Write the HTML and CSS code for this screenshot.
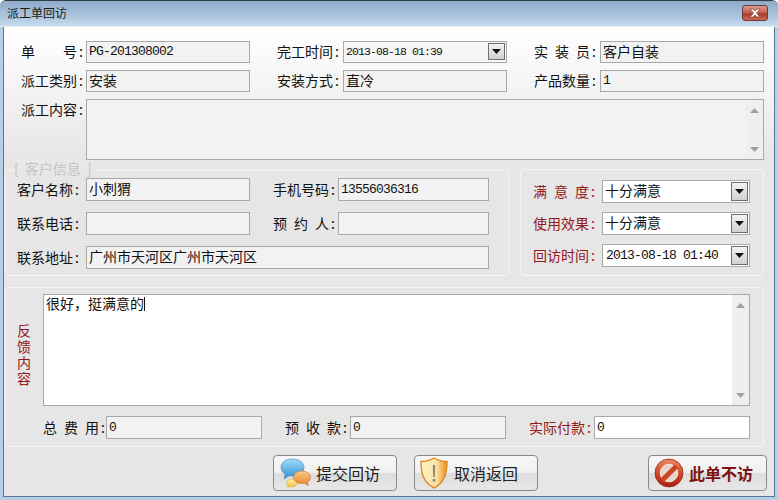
FILE: index.html
```html
<!DOCTYPE html>
<html lang="zh-CN">
<head>
  <meta charset="UTF-8" />
  <title>派工单回访</title>
  <link rel="stylesheet" href="styles.css">
</head>
<body>
<div class="window">
  <div class="titlebar">
    <span class="title">派工单回访</span>
    <div class="close">
      <svg width="14" height="10" viewBox="0 0 14 10"><path d="M2 1h3l2 2 2-2h3L8.500 5 12 9H9L7 7 5 9H2l3.500-4z" fill="#fff" stroke="#7a2a22" stroke-width=".6"/></svg>
    </div>
  </div>

  <div class="client">
    <!-- order info -->
    <div class="order">
      <div class="item"><label class="lbl"><span class="name">单号</span>:</label><div class="field mono">PG-201308002</div></div>
      <div class="item"><label class="lbl"><span class="name">完工时间</span>:</label>
        <div class="field combo small">2013-08-18 01:39
          <span class="drop"><svg width="9" height="5" viewBox="0 0 9 5"><path d="M0 0h9L4.500 5z" fill="#111"/></svg></span>
        </div>
      </div>
      <div class="item"><label class="lbl"><span class="name">实装员</span>:</label><div class="field">客户自装</div></div>
      <div class="item"><label class="lbl"><span class="name">派工类别</span>:</label><div class="field">安装</div></div>
      <div class="item"><label class="lbl"><span class="name">安装方式</span>:</label><div class="field">直冷</div></div>
      <div class="item"><label class="lbl"><span class="name">产品数量</span>:</label><div class="field mono">1</div></div>
    </div>
    <div class="content-row">
      <label class="lbl"><span class="name">派工内容</span>:</label>
      <div class="field memo">
        <div class="scroll">
          <svg width="9" height="5" viewBox="0 0 9 5"><path d="M0 5h9L4.500 0z" fill="#a0a0a0"/></svg>
          <svg width="9" height="5" viewBox="0 0 9 5"><path d="M0 0h9L4.500 5z" fill="#a0a0a0"/></svg>
        </div>
      </div>
    </div>

    <div class="panels">
      <!-- customer info -->
      <div class="panel customer">
        <span class="legend">[ 客户信息 ]</span>
        <label class="lbl"><span class="name">客户名称</span>:</label><div class="field">小刺猬</div>
        <label class="lbl lbl-mid"><span class="name">手机号码</span>:</label><div class="field mono">13556036316</div>
        <label class="lbl"><span class="name">联系电话</span>:</label><div class="field"></div>
        <label class="lbl lbl-mid"><span class="name">预约人</span>:</label><div class="field"></div>
        <label class="lbl"><span class="name">联系地址</span>:</label><div class="field wide">广州市天河区广州市天河区</div>
      </div>
      <!-- visit result -->
      <div class="panel result">
        <label class="lbl red"><span class="name">满意度</span>:</label>
        <div class="field combo white">十分满意
          <span class="drop"><svg width="9" height="5" viewBox="0 0 9 5"><path d="M0 0h9L4.500 5z" fill="#111"/></svg></span>
        </div>
        <label class="lbl red"><span class="name">使用效果</span>:</label>
        <div class="field combo white">十分满意
          <span class="drop"><svg width="9" height="5" viewBox="0 0 9 5"><path d="M0 0h9L4.500 5z" fill="#111"/></svg></span>
        </div>
        <label class="lbl red"><span class="name">回访时间</span>:</label>
        <div class="field combo white mono">2013-08-18 01:40
          <span class="drop"><svg width="9" height="5" viewBox="0 0 9 5"><path d="M0 0h9L4.500 5z" fill="#111"/></svg></span>
        </div>
      </div>
    </div>

    <!-- feedback -->
    <div class="panel feedback">
      <div class="fb-top">
        <div class="fb-side">反馈内容</div>
        <div class="field fb-text white">
          <span class="fb-value">很好，挺满意的<i class="caret"></i></span>
          <div class="scroll">
            <svg width="9" height="5" viewBox="0 0 9 5"><path d="M0 5h9L4.500 0z" fill="#a0a0a0"/></svg>
            <svg width="9" height="5" viewBox="0 0 9 5"><path d="M0 0h9L4.500 5z" fill="#a0a0a0"/></svg>
          </div>
        </div>
      </div>
      <div class="fb-bottom">
        <div class="item2 first"><label class="lbl"><span class="name">总费用</span>:</label><div class="field mono">0</div></div>
        <div class="item2"><label class="lbl"><span class="name">预收款</span>:</label><div class="field mono">0</div></div>
        <div class="item2"><label class="lbl red"><span class="name">实际付款</span>:</label><div class="field mono white">0</div></div>
      </div>
    </div>

    <div class="buttons">
      <div class="btn btn-submit">
        <svg width="32" height="30" viewBox="0 0 32 30">
          <defs>
            <linearGradient id="gb" x1="0" y1="0" x2="0" y2="1"><stop offset="0" stop-color="#9fdcf7"/><stop offset="1" stop-color="#2f8fd8"/></linearGradient>
            <linearGradient id="go" x1="0" y1="0" x2="0" y2="1"><stop offset="0" stop-color="#f9c98a"/><stop offset="1" stop-color="#e8832a"/></linearGradient>
            <linearGradient id="gy" x1="0" y1="0" x2="0" y2="1"><stop offset="0" stop-color="#fff0b0"/><stop offset="1" stop-color="#f0c040"/></linearGradient>
          </defs>
          <path d="M12 1c7 0 12 3.500 12 8.500S19 18 12 18c-1 0-2 0-3-.3L4 21l1.300-5C2.500 14.500 1 12.200 1 9.500 1 4.500 5.500 1 12 1z" fill="url(#gb)" stroke="#3d88c0" stroke-width=".6"/>
          <path d="M12 21c-3 0-5.500 1.800-5.500 4 0 1 .5 2 1.500 2.700L7.500 29.500 11 28.600c.4.100.7.100 1 .100 3 0 5.500-1.700 5.500-3.800S15 21 12 21z" fill="url(#gy)" stroke="#cfa030" stroke-width=".5"/>
          <path d="M21.500 13c5 0 9 2.700 9 6.300 0 2-1.100 3.600-3 4.800l.8 3.400-3.900-2.300c-1 .200-1.900.300-2.900.300-4.800 0-8-2.700-8-6.200S17 13 21.500 13z" fill="url(#go)" stroke="#c87420" stroke-width=".6"/>
        </svg>
        <span>提交回访</span>
      </div>
      <div class="btn btn-cancel">
        <svg width="28" height="32" viewBox="0 0 28 32">
          <defs>
            <linearGradient id="gs" x1="0" y1="0" x2="1" y2="0"><stop offset="0" stop-color="#fff3c8"/><stop offset=".6" stop-color="#fbe3a4"/><stop offset="1" stop-color="#e88a1e"/></linearGradient>
          </defs>
          <path d="M14 1c4 2.500 8 3.500 13 3.500 0 11-2 21-13 26.500C3 25.500 1 15.500 1 4.500 6 4.500 10 3.500 14 1z" fill="url(#gs)" stroke="#e08a20" stroke-width="1.400"/>
          <path d="M12.800 8h2.400l-.4 12h-1.600zM12.700 22h2.600v2.800h-2.600z" fill="#8a8a80"/>
        </svg>
        <span>取消返回</span>
      </div>
      <div class="btn btn-skip">
        <svg width="30" height="30" viewBox="0 0 30 30">
          <defs>
            <linearGradient id="gr" x1="0" y1="0" x2="0" y2="1"><stop offset="0" stop-color="#ef8a6a"/><stop offset=".5" stop-color="#d4492a"/><stop offset="1" stop-color="#a5200f"/></linearGradient>
          </defs>
          <circle cx="15" cy="15" r="14" fill="url(#gr)" stroke="#9a2a15" stroke-width=".8"/>
          <circle cx="15" cy="15" r="8.800" fill="#e9d4cb" stroke="#f6e7df" stroke-width="1"/>
          <path d="M6.500 20.500 20.500 6.500l3.500 3.500L10 24z" fill="#cc4426"/>
        </svg>
        <span>此单不访</span>
      </div>
    </div>
  </div>
</div>
</body>
</html>
```

FILE: styles.css
```css
* {
  box-sizing: border-box;
}
body {
  margin: 0;
  background: #fff;
  font-family: "Noto Sans CJK SC", sans-serif;
  font-size: 14px;
  color: #111;
}
.window {
  width: 778px;
  height: 500px;
  display: flex;
  flex-direction: column;
  padding: 0 3px 3px;
  background: #b5cfe6;
  border-top: 1px solid #2f3d47;
  border-radius: 6px 6px 0 0;
}
.titlebar {
  height: 26px;
  flex: none;
  margin: 0 -3px;
  padding: 4px 10px 0 7px;
  display: flex;
  justify-content: space-between;
  align-items: flex-start;
  background: linear-gradient(#8fabc9, #a9c3dc 55%, #c6dbec);
  border-bottom: 1px solid #e4eff7;
  border-radius: 5px 5px 0 0;
}
.title {
  font-size: 12px;
  line-height: 15px;
  color: #1a1a1a;
}
.close {
  width: 26px;
  height: 16px;
  display: flex;
  align-items: center;
  justify-content: center;
  background: linear-gradient(#d99a8e, #c0604f 50%, #a83a2a 55%, #c96a55);
  border: 1px solid #6d3a36;
  border-radius: 3px;
}
.client {
  flex: 1;
  padding: 14px 7px 5px 1px;
  background: linear-gradient(#fff, #e6e6e6 135px);
  border: 1px solid #56799a;
  border-top: none;
}

/* labels: name stretched over four characters */
.lbl {
  display: flex;
  align-items: center;
  flex: none;
  width: 66px;
  padding-bottom: 2px;
  white-space: nowrap;
}
.lbl .name {
  width: 56px;
  margin-right: 2px;
  text-align: justify;
  text-align-last: justify;
}
.red {
  color: #93191b;
}

.field {
  position: relative;
  display: flex;
  align-items: center;
  height: 22px;
  padding: 0 0 3px 2px;
  min-width: 0;
  background: #f2f2f2;
  border: 1px solid #a9a9a9;
  white-space: nowrap;
}
.white {
  background: #fff;
}
.mono {
  padding-bottom: 1px;
  font-family: "Liberation Mono", monospace;
  font-size: 13px;
  letter-spacing: -.8px;
}
.small {
  padding-bottom: 1px;
  font-family: "Liberation Mono", monospace;
  font-size: 11.5px;
  letter-spacing: -.9px;
  background: #f6f6f6;
}
.combo .drop {
  position: absolute;
  right: 1px;
  top: 50%;
  margin-top: -10px;
  width: 17px;
  height: 19px;
  display: flex;
  align-items: center;
  justify-content: center;
  background: linear-gradient(#f4f4f4, #cfcfcf);
  border: 1px solid #6e6e6e;
}
.small .drop {
  height: 17px;
  margin-top: -9px;
}

.order {
  display: grid;
  grid-template-columns: repeat(3, 230px);
  column-gap: 27px;
  row-gap: 7px;
  padding-left: 15px;
}
.item {
  display: flex;
}
.item:nth-child(3n+1) .name,
.content-row .name {
  margin-left: 1px;
}
.item .field {
  flex: 1;
}
.content-row {
  display: flex;
  margin: 7px 0 0 15px;
  width: 744px;
}
.content-row .lbl {
  height: 22px;
}
.memo {
  flex: 1;
  height: 61px;
}
.scroll {
  position: absolute;
  top: 0;
  right: 0;
  bottom: 0;
  width: 17px;
  padding: 8px 0 7px;
  display: flex;
  flex-direction: column;
  align-items: center;
  justify-content: space-between;
  background: #efefef;
}

.panels {
  display: flex;
  gap: 11px;
  margin-top: 10px;
}
.panel {
  position: relative;
  background: #e6e6e6;
  border: 1px solid #f4f4f4;
  border-radius: 3px;
}
.customer {
  width: 504px;
  height: 106px;
  padding: 7px 0 0 11px;
  display: grid;
  grid-template-columns: 69px 164px 88px 151px;
  grid-auto-rows: 23px;
  row-gap: 11px;
}
.customer .field,
.result .field {
  height: 23px;
}
.lbl-mid {
  justify-self: end;
  width: 65px;
}
.wide {
  grid-column: 2 / 5;
}
.legend {
  position: absolute;
  left: 8px;
  top: -11px;
  padding: 0 4px 0 0;
  font-size: 14px;
  line-height: 17px;
  word-spacing: 3px;
  color: #c4c4c4;
  background: linear-gradient(#e9e9e9, #e6e6e6);
}
.result {
  width: 244px;
  height: 107px;
  margin-top: -1px;
  padding: 10px 0 0 12px;
  display: grid;
  grid-template-columns: 69px 148px;
  grid-auto-rows: 23px;
  row-gap: 9px;
}
.result .mono {
  padding-left: 3px;
}

.feedback {
  width: 759px;
  height: 160px;
  margin-top: 11px;
  padding-top: 6px;
}
.fb-top {
  display: flex;
}
.fb-side {
  width: 37px;
  padding: 28px 11px 0 11px;
  font-size: 14px;
  line-height: 16px;
  color: #93191b;
}
.fb-text {
  width: 707px;
  height: 112px;
  align-items: flex-start;
  padding-top: 0;
}
.fb-value {
  line-height: 17px;
}
.caret {
  display: inline-block;
  width: 1px;
  height: 14px;
  background: #111;
  vertical-align: -2px;
}
.fb-bottom {
  display: grid;
  grid-template-columns: repeat(3, 221px);
  column-gap: 23px;
  margin-top: 10px;
  padding-left: 35px;
}
.item2 {
  display: flex;
}
.item2 .lbl {
  width: 65px;
}
.item2 .field {
  flex: 1;
  height: 23px;
}
.first .lbl .name {
  margin-left: 2px;
}

.buttons {
  display: flex;
  gap: 17px;
  margin-top: 8px;
  padding-left: 268px;
}
.btn {
  height: 36px;
  width: 124px;
  display: flex;
  align-items: center;
  font-size: 16px;
  color: #222;
  background: linear-gradient(#f7f7f7, #f0f0f0 48%, #dcdcdc 52%, #e8e8e8);
  border: 1px solid #8a8a8a;
  border-radius: 4px;
}
.btn-submit {
  padding-left: 6px;
  gap: 4px;
}
.btn-cancel {
  padding-left: 5px;
  gap: 6px;
}
.btn-skip {
  width: 119px;
  margin-left: auto;
  padding-left: 5px;
  gap: 5px;
  font-weight: bold;
  color: #7c1212;
}
```
